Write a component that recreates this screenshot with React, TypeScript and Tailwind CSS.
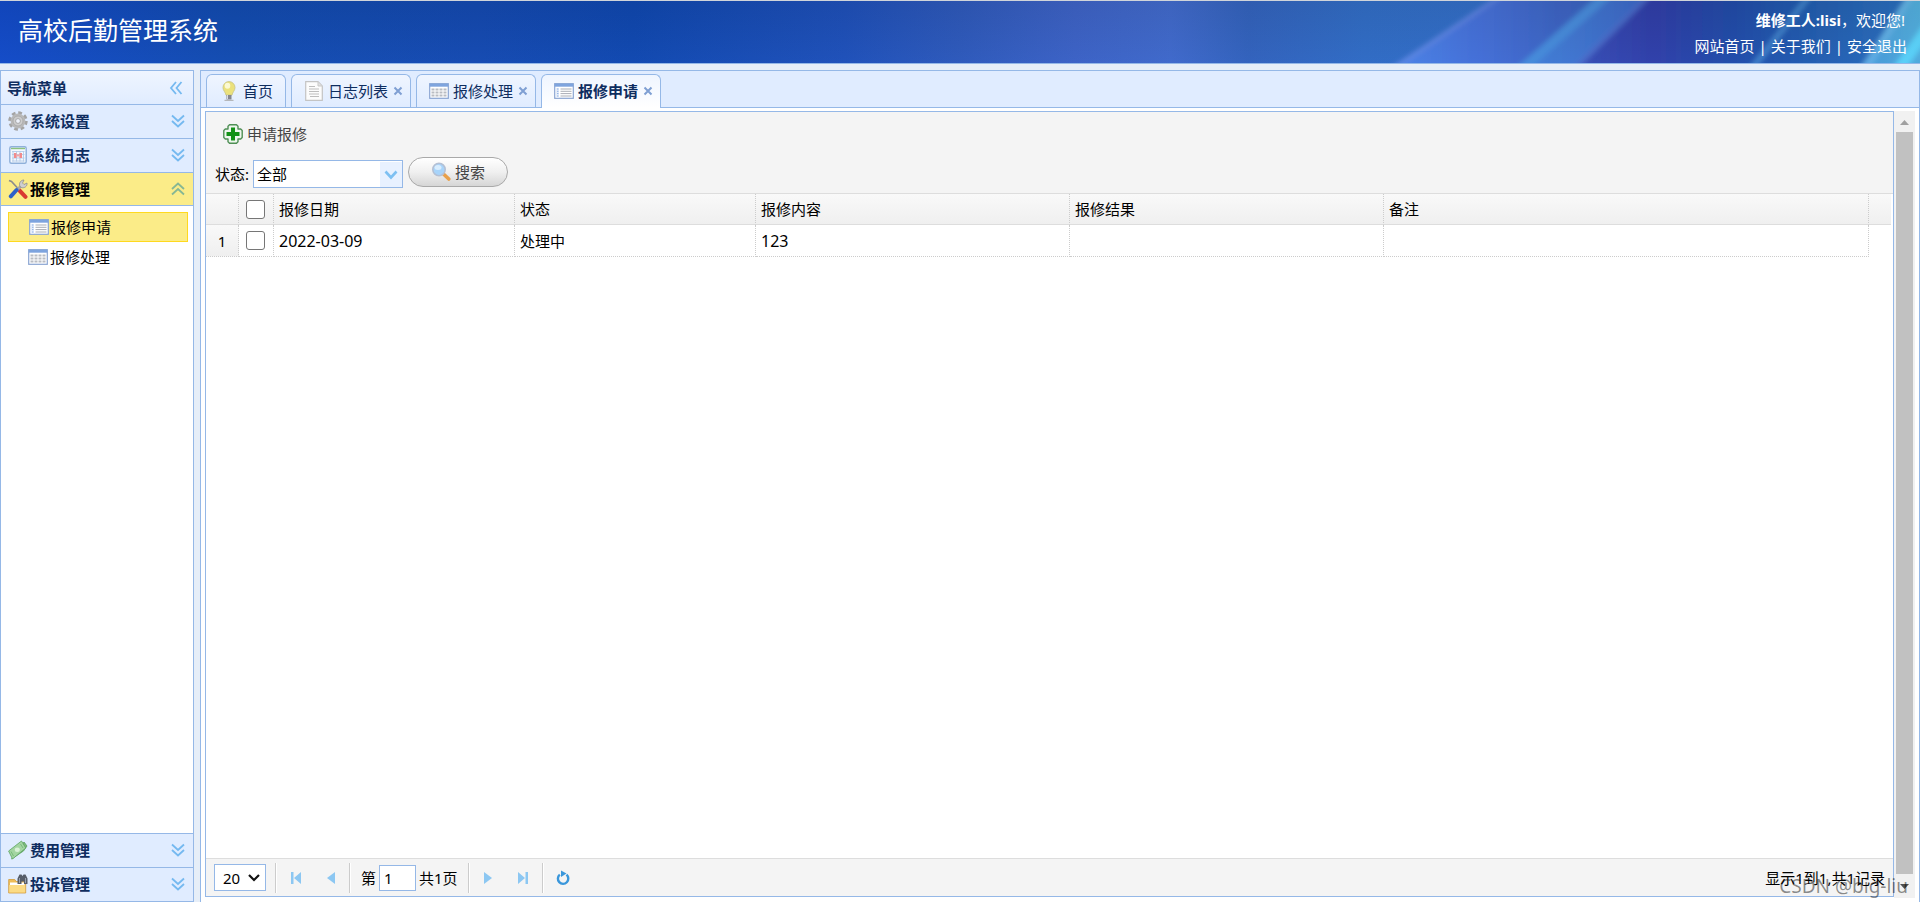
import { useState } from "react";
import type { ReactNode } from "react";

const GearIcon = () => (
  <svg viewBox="0 0 20 20" className="w-5 h-5 shrink-0">
    <circle cx="10" cy="10" r="8" fill="none" stroke="#a4a4a4" strokeWidth="3.4" strokeDasharray="3.6 2.68" />
    <circle cx="10" cy="10" r="7.4" fill="#b9b9b9" />
    <circle cx="10" cy="10" r="5" fill="#cdcdcd" stroke="#a6a6a6" strokeWidth="0.8" />
    <circle cx="10" cy="10" r="2.4" fill="#eef2fa" stroke="#9a9a9a" strokeWidth="0.8" />
  </svg>
);

const CalendarIcon = () => (
  <svg viewBox="0 0 20 20" className="w-5 h-5 shrink-0">
    <rect x="1.8" y="1.8" width="16.4" height="16.4" rx="1.5" fill="#f3f8fe" stroke="#8fb0da" strokeWidth="1.4" />
    <path d="M3 3.500h14" stroke="#8cc27e" strokeWidth="1.400" />
    <path d="M5 6v10.500M8.500 6v10.500M12 6v10.500M15.500 6v10.500M4 6.500h12.500M4 9.500h12.500M4 13h12.500M4 16h12.500" stroke="#b4cbe8" strokeWidth="0.9" />
    <path d="M6 8h2.500v5H6zM11.500 8H14v5h-2.500z" fill="#f28b8b" />
    <path d="M8.500 9.500h3v2h-3z" fill="#f7a4a4" />
  </svg>
);

const ToolsIcon = () => (
  <svg viewBox="0 0 20 20" className="w-5 h-5 shrink-0">
    <path d="M1 1.500l2.500 1 7 7.500" stroke="#8c8c8c" strokeWidth="1.6" fill="none" />
    <path d="M11 11l6.500 6.800" stroke="#d93a32" strokeWidth="4" strokeLinecap="round" />
    <path d="M13.500 6.500L8 12" stroke="#a8a8a8" strokeWidth="2.800" />
    <path d="M8.500 11L2.800 17.300" stroke="#2e62c9" strokeWidth="4" strokeLinecap="round" />
    <path d="M12 7.500c-1.500-3 .5-6.500 4-6.500l-1.500 3 1.500 1.500 3-1.500c.5 3.500-3 5.500-5.500 4.500z" fill="#cfcfcf" stroke="#8d8d8d" strokeWidth="0.800" />
  </svg>
);

const MoneyIcon = () => (
  <svg viewBox="0 0 20 20" className="w-5 h-5 shrink-0">
    <path d="M3.500 19l12-8 3.500-5-3-4z" fill="#7dbb7d" stroke="#5a9f5c" strokeWidth="0.800" />
    <path d="M.6 11L13.500 1l4.300 7L4.500 19z" fill="#a3d5a1" stroke="#5ea562" strokeWidth="0.800" />
    <ellipse cx="9.300" cy="9.800" rx="2.600" ry="2.200" fill="#d9f1d6" />
    <path d="M3 11.500l2.500 4.500M12.500 4l2.500 4" stroke="#78ba7a" />
  </svg>
);

const FolderFindIcon = () => (
  <svg viewBox="0 0 20 20" className="w-5 h-5 shrink-0">
    <path d="M.7 5.500h6l1.500 2h9.500V19H.7z" fill="#eebd58" stroke="#d09a3c" strokeWidth="0.8" />
    <path d="M2 8.500h14.500v3H2z" fill="#fff" />
    <path d="M1.200 11h16v7.500h-16z" fill="#fbdb84" />
    <path d="M9.500 10V4.500L11.500.5h2l1 1.500 1-1.500h2l2 4V10H16V7.500h-2.500V10z" fill="#565d69" />
    <path d="M11.500 4v5M17.500 4v5" stroke="#98a1af" strokeWidth="1" />
  </svg>
);

const ListIcon = () => (
  <svg viewBox="0 0 20 16" className="w-5 h-4 shrink-0">
    <rect x=".7" y=".7" width="18.600" height="14.600" fill="#fff" stroke="#8aa5d2" strokeWidth="1.2" />
    <path d="M.7.700h18.600v3H.700z" fill="#7ea4de" />
    <path d="M2 5h3v9.500H2z" fill="#e6eefa" />
    <path d="M3 6h1.500M3 8.300h1.500M3 10.600h1.500M3 13h1.500" stroke="#8fb0e4" />
    <path d="M6.500 6h11M6.500 8.300h11M6.500 10.600h11M6.500 13h11" stroke="#a9adb5" />
  </svg>
);

const GridIcon = () => (
  <svg viewBox="0 0 20 16" className="w-5 h-4 shrink-0">
    <rect x=".7" y=".7" width="18.600" height="14.600" fill="#fff" stroke="#8aa5d2" strokeWidth="1.2" />
    <path d="M.7.700h18.600v3H.700z" fill="#7ea4de" />
    <path
      d="M2.500 6.500h3M6.500 6.500h3M10.500 6.500h3M14.500 6.500h3M2.500 9.500h3M6.500 9.500h3M10.500 9.500h3M14.500 9.500h3M2.500 12.500h3M6.500 12.500h3M10.500 12.500h3M14.500 12.500h3"
      stroke="#b9bcc2"
      strokeWidth="1.800"
    />
  </svg>
);

const BulbIcon = () => (
  <svg viewBox="0 0 20 20" className="w-5 h-5 shrink-0">
    <path d="M10 .600a6 6 0 0 0-6 6c0 3 2.500 4.500 3 7.500h6c.5-3 3-4.500 3-7.500a6 6 0 0 0-6-6z" fill="#ebe17c" stroke="#cbc687" strokeWidth="0.9" />
    <ellipse cx="8.500" cy="4.800" rx="2.800" ry="3" fill="#fbf9d2" />
    <path d="M7.500 14h5v4.500h-5z" fill="#85878d" />
    <path d="M8.500 14v4" stroke="#d9dbe0" />
    <path d="M5.500 19.300h9" stroke="#a9a9a9" />
  </svg>
);

const PageIcon = () => (
  <svg viewBox="0 0 20 20" className="w-5 h-5 shrink-0">
    <path d="M1.700.7h12.300l4.300 4.300v14.300H1.700z" fill="#fcfcfc" stroke="#c4c4c4" strokeWidth="1.200" />
    <path d="M14 1v4h4" fill="#e2e2e2" stroke="#c9c9c9" />
    <path d="M5 5.500h6M5 8h10M5 10.500h10M5 13h10M6 15.500h9" stroke="#bdbdbd" strokeWidth="1.1" />
  </svg>
);

const AddIcon = () => (
  <svg viewBox="0 0 20 20" className="w-5 h-5 shrink-0">
    <path
      d="M6.500.8h7L15 2.300V5h2.700l1.500 1.500v7L17.700 15H15v2.700l-1.500 1.500h-7L5 17.700V15H2.300L.8 13.500v-7L2.300 5H5V2.300z"
      fill="#eef6ee"
      stroke="#4f8f55"
      strokeWidth="1.400"
      strokeLinejoin="round"
    />
    <path d="M8 3.500h4V8h4.500v4H12v4.500H8V12H3.500V8H8z" fill="#129216" />
  </svg>
);

const SearchIcon = () => (
  <svg viewBox="0 0 20 20" className="w-5 h-5 shrink-0">
    <path d="M13 12.500l4.800 4.500" stroke="#e8a04a" strokeWidth="3.600" strokeLinecap="round" />
    <circle cx="8" cy="7.500" r="6.200" fill="#a8d4fa" stroke="#b4c0d4" strokeWidth="1.600" />
    <ellipse cx="7" cy="5.500" rx="3.500" ry="2.500" fill="#d8edfe" />
  </svg>
);

const Chevrons = ({ dir }: { dir: "down" | "up" | "left" }) => {
  if (dir === "left")
    return (
      <svg viewBox="0 0 14 14" className="w-3.5 h-3.5">
        <path d="M7 1L2 7l5 6M12.500 1l-5 6 5 6" fill="none" stroke="#75b9f0" strokeWidth="1.800" />
      </svg>
    );
  return (
    <svg viewBox="0 0 14 14" className="w-3.5 h-3.5">
      <path
        d={dir === "down" ? "M1 1.500L7 7l6-5.500M1 7l6 5.500L13 7" : "M1 7l6-5.500L13 7M1 12.500L7 7l6 5.500"}
        fill="none"
        stroke={dir === "down" ? "#75b9f0" : "#86b794"}
        strokeWidth="1.800"
      />
    </svg>
  );
};

const HeaderArt = () => (
  <svg viewBox="0 0 1920 62" preserveAspectRatio="none" className="absolute inset-0 w-full h-full" aria-hidden="true">
    <defs>
      <filter id="soft" x="-5%" y="-20%" width="110%" height="140%">
        <feGaussianBlur stdDeviation="2.5" />
      </filter>
      <linearGradient id="sky">
        <stop offset="0" stopColor="#1248c2" />
        <stop offset=".12" stopColor="#1249a8" />
        <stop offset=".25" stopColor="#1447a9" />
        <stop offset=".33" stopColor="#0f45a8" />
        <stop offset=".44" stopColor="#1f4eb2" />
        <stop offset=".5" stopColor="#3058b4" />
        <stop offset=".56" stopColor="#4062c0" />
        <stop offset=".61" stopColor="#446ac6" />
        <stop offset=".65" stopColor="#3562b6" />
        <stop offset=".71" stopColor="#336dbf" />
        <stop offset="1" stopColor="#3a72c8" />
      </linearGradient>
      <linearGradient id="bandA">
        <stop offset="0" stopColor="#5389e6" />
        <stop offset=".35" stopColor="#4a72d6" />
        <stop offset=".7" stopColor="#4064be" />
        <stop offset="1" stopColor="#3865b4" />
      </linearGradient>
      <linearGradient id="bandB">
        <stop offset="0" stopColor="#4785d4" />
        <stop offset="1" stopColor="#3e5dbb" />
      </linearGradient>
      <linearGradient id="bandC">
        <stop offset="0" stopColor="#3c4cae" />
        <stop offset=".22" stopColor="#323aa0" />
        <stop offset=".42" stopColor="#2448a0" />
        <stop offset=".65" stopColor="#245ca8" />
        <stop offset="1" stopColor="#2f75bb" />
      </linearGradient>
      <linearGradient id="bandD">
        <stop offset="0" stopColor="#4a9ed4" />
        <stop offset="1" stopColor="#5cbcdc" />
      </linearGradient>
      <linearGradient id="shade" x2="0" y2="1">
        <stop offset="0" stopColor="#0a3080" stopOpacity=".12" />
        <stop offset="1" stopColor="#2a6cf0" stopOpacity=".14" />
      </linearGradient>
    </defs>
    <path d="M0 0h1920v62H0z" fill="url(#sky)" />
    <g filter="url(#soft)">
      <path d="M1389 68L1499-6h131v74z" fill="url(#bandA)" />
      <path d="M1389 68L1499-6h6L1396 68z" fill="#7492e2" opacity=".7" />
      <path d="M1515 68L1599-6h93v74z" fill="url(#bandB)" />
      <path d="M1515 68L1599-6h15L1530 68z" fill="#4d95da" opacity=".8" />
      <path d="M1572 68L1648-6h290v74z" fill="url(#bandC)" />
      <path d="M1570 68L1647-6h6L1578 68z" fill="#5878cc" opacity=".7" />
      <path d="M1748 68L1807-6h6L1755 68z" fill="#4c94cf" opacity=".8" />
      <path d="M1860 68L1908-6h30v74z" fill="url(#bandD)" />
      <path d="M1860 68L1908-6h7L1870 68z" fill="#74bfe8" opacity=".7" />
      <path d="M1892 68L1926 20v20L1906 68z" fill="#62e0fa" />
    </g>
    <path d="M0 0h1920v62H0z" fill="url(#shade)" />
  </svg>
);

const topMenus = [
  { title: "系统设置", icon: <GearIcon /> },
  { title: "系统日志", icon: <CalendarIcon /> },
];

const bottomMenus = [
  { title: "费用管理", icon: <MoneyIcon /> },
  { title: "投诉管理", icon: <FolderFindIcon /> },
];

const tabs = [
  { title: "首页", icon: <BulbIcon />, closable: false },
  { title: "日志列表", icon: <PageIcon />, closable: true },
  { title: "报修处理", icon: <GridIcon />, closable: true },
  { title: "报修申请", icon: <ListIcon />, closable: true },
];

const rows = [{ date: "2022-03-09", status: "处理中", content: "123", result: "", remark: "" }];

function AccordionHeader({ title, icon, open }: { title: string; icon: ReactNode; open?: boolean }) {
  return (
    <button
      className={`flex items-center w-full shrink-0 pl-[7px] pr-2 gap-0.5 border-b border-[#95b8e7] font-bold ${
        open ? "h-[33px] bg-[#fbec88] text-black" : "h-[34px] pb-0.5 bg-[#e0ecff] text-[#0e2d5f]"
      }`}
    >
      {icon}
      <span className="flex-1 text-left">{title}</span>
      <Chevrons dir={open ? "up" : "down"} />
    </button>
  );
}

function Sidebar() {
  return (
    <aside className="flex flex-col w-[194px] shrink-0 border border-b-0 border-[#95b8e7] bg-white">
      <div className="flex items-center justify-between h-[34px] shrink-0 pl-1.5 pr-2.5 border-b border-[#95b8e7] bg-linear-to-b from-[#eff5ff] to-[#e0ecff] font-bold text-[#0e2d5f]">
        导航菜单
        <button aria-label="折叠">
          <Chevrons dir="left" />
        </button>
      </div>
      {topMenus.map((m) => (
        <AccordionHeader key={m.title} {...m} />
      ))}
      <AccordionHeader title="报修管理" icon={<ToolsIcon />} open />
      <nav className="flex-1 min-h-0 pt-1.5 pl-[7px] pr-[5px] border-b border-[#95b8e7]">
        <a href="#apply" className="flex items-center h-[30px] pl-5 gap-0.5 bg-[#fbec88] border border-[#ffd91f]">
          <ListIcon />
          报修申请
        </a>
        <a href="#handle" className="flex items-center h-[30px] pl-5 gap-0.5">
          <GridIcon />
          报修处理
        </a>
      </nav>
      {bottomMenus.map((m) => (
        <AccordionHeader key={m.title} {...m} />
      ))}
    </aside>
  );
}

function TabStrip({ active, onSelect }: { active: string; onSelect: (title: string) => void }) {
  return (
    <div className="flex items-end shrink-0 h-[37px] pl-[5px] gap-[5px] bg-[#e0ecff] border-b border-[#95b8e7]">
      {tabs.map((tab) => {
        const current = tab.title === active;
        return (
          <div
            key={tab.title}
            className={`flex items-center border border-b-0 border-[#95b8e7] rounded-t-md text-[#0e2d5f] ${
              tab.closable ? "w-[120px] pl-3 gap-[5px]" : "w-20 pl-3"
            } ${
              current
                ? "h-[34px] -mb-px pb-0.5 bg-linear-to-b from-[#eff5ff] to-white font-bold"
                : "h-[33px] pb-px bg-linear-to-b from-[#eff5ff] to-[#e0ecff]"
            }`}
          >
            <button onClick={() => onSelect(tab.title)} className="flex items-center gap-1">
              {tab.icon}
              {tab.title}
            </button>
            {tab.closable && (
              <button aria-label="关闭">
                <svg viewBox="0 0 10 10" className="w-2.5 h-2.5">
                  <path d="M1.500 1.500l7 7M8.500 1.500l-7 7" stroke="#7f9fd3" strokeWidth="2" />
                </svg>
              </button>
            )}
          </div>
        );
      })}
    </div>
  );
}

function Toolbar() {
  return (
    <div className="shrink-0 pt-1 bg-[#f4f4f4] border-b border-[#ddd]">
      <button className="flex items-center h-9 ml-[17px] gap-1 text-[#444]">
        <AddIcon />
        申请报修
      </button>
      <div className="flex items-start h-[41px] pt-[5px] pl-[9px] gap-[5px]">
        <div className="flex items-center h-[34px] gap-1">
          <label htmlFor="status">状态:</label>
          <div className="relative">
            <select
              id="status"
              className="block appearance-none w-[150px] h-7 pl-[3px] bg-white border border-[#95b8e7] outline-none"
            >
              <option>全部</option>
              <option>处理中</option>
            </select>
            <span className="absolute right-px top-0.5 bottom-px w-[22px] flex items-center justify-center bg-[#e8f1ff] pointer-events-none">
              <svg viewBox="0 0 14 10" className="w-3.5 h-2.5">
                <path d="M1.500 1.500L7 7.500l5.500-6" fill="none" stroke="#7ec0f2" strokeWidth="2.600" />
              </svg>
            </span>
          </div>
        </div>
        <button className="flex items-center justify-center w-[100px] h-[30px] gap-1 rounded-full border border-[#a9a9a9] bg-linear-to-b from-white via-[#f0f0f0] to-[#d6d6d6] text-[#444]">
          <SearchIcon />
          搜索
        </button>
      </div>
    </div>
  );
}

const headCell = "h-[31px] text-left font-normal border-b border-b-[#ddd] border-r border-r-[#ccc] [border-right-style:dotted]";
const bodyCell = "h-8 border-b border-r border-dotted border-[#ccc]";

const Check = ({ label }: { label: string }) => (
  <input
    type="checkbox"
    aria-label={label}
    className="block ml-[7px] appearance-none w-[19px] h-[19px] rounded-[3px] border border-[#767676] bg-white checked:bg-[#0075ff]"
  />
);

function DataGrid() {
  return (
    <div className="flex-1 min-h-0 pr-0.5 bg-white">
      <table className="w-full table-fixed border-separate border-spacing-0">
        <colgroup>
          <col className="w-[33px]" />
          <col className="w-[35px]" />
          <col className="w-[241px]" />
          <col className="w-[241px]" />
          <col className="w-[314px]" />
          <col className="w-[314px]" />
          <col />
          <col className="w-[22px]" />
        </colgroup>
        <thead>
          <tr className="bg-linear-to-b from-[#f9f9f9] to-[#efefef]">
            <th className={headCell} />
            <th className={headCell}>
              <Check label="全选" />
            </th>
            <th className={`${headCell} pl-[5px]`}>报修日期</th>
            <th className={`${headCell} pl-[5px]`}>状态</th>
            <th className={`${headCell} pl-[5px]`}>报修内容</th>
            <th className={`${headCell} pl-[5px]`}>报修结果</th>
            <th className={`${headCell} pl-[5px]`}>备注</th>
            <th className="border-b border-[#ddd]" />
          </tr>
        </thead>
        <tbody>
          {rows.map((row, i) => (
            <tr key={row.date}>
              <td className={`${bodyCell} text-center bg-linear-to-b from-[#f9f9f9] to-[#efefef]`}>{i + 1}</td>
              <td className={bodyCell}>
                <Check label="选择" />
              </td>
              <td className={`${bodyCell} pl-[5px] text-base leading-5`}>{row.date}</td>
              <td className={`${bodyCell} pl-[5px]`}>{row.status}</td>
              <td className={`${bodyCell} pl-[5px] text-base leading-5`}>{row.content}</td>
              <td className={`${bodyCell} pl-[5px]`}>{row.result}</td>
              <td className={`${bodyCell} pl-[5px]`}>{row.remark}</td>
              <td />
            </tr>
          ))}
        </tbody>
      </table>
    </div>
  );
}

const Separator = () => <span className="w-0.5 h-[30px] bg-white border-l border-[#ccc]" />;

const PagerButton = ({ label, children }: { label: string; children: ReactNode }) => (
  <button aria-label={label} className="flex items-center justify-center w-[35px] h-7">
    <svg viewBox="0 0 16 16" className="w-4 h-4" fill="#8cc7f2">
      {children}
    </svg>
  </button>
);

function Pager() {
  const [page, setPage] = useState("1");

  return (
    <div className="flex items-center shrink-0 h-[38px] px-2 bg-[#f4f4f4] border-t border-[#ddd]">
      <div className="relative mr-[9px]">
        <select
          aria-label="每页条数"
          defaultValue="20"
          className="block appearance-none w-[52px] h-[27px] pl-2 bg-white border border-[#95b8e7] outline-none"
        >
          <option>10</option>
          <option>20</option>
          <option>50</option>
        </select>
        <svg viewBox="0 0 12 8" className="absolute right-1.5 top-2.5 w-3 h-2 pointer-events-none">
          <path d="M1 1l5 5 5-5" fill="none" stroke="#111" strokeWidth="2.200" />
        </svg>
      </div>
      <Separator />
      <div className="flex px-px">
        <PagerButton label="首页">
          <path d="M3 2h2.500v12H3zM13 2v12L6 8z" />
        </PagerButton>
        <PagerButton label="上一页">
          <path d="M12 2v12L4 8z" />
        </PagerButton>
      </div>
      <Separator />
      <label className="flex items-center px-2.5 gap-[3px]">
        第
        <input
          value={page}
          onChange={(e) => setPage(e.target.value)}
          className="w-[37px] h-[26px] px-1 bg-white border border-[#95b8e7] outline-none"
        />
        <span>共1页</span>
      </label>
      <Separator />
      <div className="flex px-px">
        <PagerButton label="下一页">
          <path d="M4 2v12l8-6z" />
        </PagerButton>
        <PagerButton label="末页">
          <path d="M3 2v12l7-6zM10.500 2H13v12h-2.500z" />
        </PagerButton>
      </div>
      <Separator />
      <div className="flex px-0.5">
        <PagerButton label="刷新">
          <path d="M4.800 4.600a5.200 5.200 0 1 0 6.700.1" fill="none" stroke="#3a97db" strokeWidth="2.400" />
          <path d="M6 .500l5.500 3L6 7z" fill="#3a97db" />
        </PagerButton>
      </div>
      <span className="ml-auto">显示1到1,共1记录</span>
    </div>
  );
}

const ScrollBar = () => (
  <div className="flex flex-col items-center w-[21px] shrink-0 bg-[#f1f1f1]">
    <svg viewBox="0 0 21 21" className="w-full h-[21px]">
      <path d="M6 14l4.500-5 4.500 5z" fill="#a0a0a0" />
    </svg>
    <div className="flex-1 w-[17px] bg-[#c1c1c1]" />
    <svg viewBox="0 0 21 24" className="w-full h-6">
      <path d="M6 10h9l-4.500 5z" fill="#505050" />
    </svg>
  </div>
);

export default function App() {
  const [active, setActive] = useState("报修申请");

  return (
    <div className="relative flex flex-col h-screen overflow-hidden bg-[#e6eef8] text-black text-[15px] leading-5 font-['Noto_Sans','Noto_Sans_CJK_SC',sans-serif]">
      <header className="relative flex items-start justify-between shrink-0 h-16 border-t border-t-[#d0d4da] border-b border-b-[#95b8e7] text-white">
        <HeaderArt />
        <h1 className="relative pl-[18px] pt-[13px] text-[25px] leading-8">高校后勤管理系统</h1>
        <div className="relative flex flex-col items-end pr-[13px] pt-1.5 leading-[26px]">
          <p className="pr-0.5">
            <strong>维修工人:lisi</strong>，欢迎您!
          </p>
          <p className="flex gap-1">
            <a href="#home">网站首页</a>
            <span>|</span>
            <a href="#about">关于我们</a>
            <span>|</span>
            <a href="#logout">安全退出</a>
          </p>
        </div>
      </header>

      <div className="flex flex-1 min-h-0 pt-1.5 gap-1.5">
        <Sidebar />
        <main className="flex flex-col flex-1 min-w-0 border border-b-0 border-[#95b8e7] bg-white">
          <TabStrip active={active} onSelect={setActive} />
          <div className="flex flex-1 min-h-0 pt-[3px] px-1 pb-1">
            <section className="flex flex-col flex-1 min-w-0 mb-px border border-[#95b8e7]">
              <Toolbar />
              <DataGrid />
              <Pager />
            </section>
            <ScrollBar />
          </div>
        </main>
      </div>

      <span className="absolute right-3 bottom-1.5 text-[19px] text-black/45 pointer-events-none">CSDN @big-liu</span>
    </div>
  );
}
